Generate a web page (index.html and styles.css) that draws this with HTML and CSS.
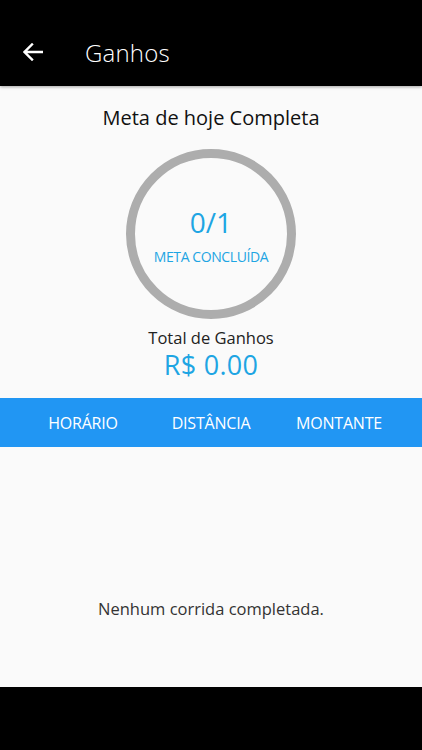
FILE: index.html
```html
<!DOCTYPE html>
<html lang="pt">
<head>
<meta charset="utf-8">
<link rel="stylesheet" href="styles.css">
</head>
<body>
<div class="screen">
  <header class="appbar">
    <svg class="back" width="20" height="18" viewBox="0 0 20 18" aria-hidden="true">
      <path d="M19 9H2M9 1.5L1.5 9L9 16.5" fill="none" stroke="#fff" stroke-width="2.4" stroke-linecap="square"/>
    </svg>
    <span class="title">Ganhos</span>
  </header>
  <main class="content">
    <section class="summary">
      <h1 class="goal-title">Meta de hoje Completa</h1>
      <div class="ring">
        <span class="ring-count">0/1</span>
        <span class="ring-label">META CONCLUÍDA</span>
      </div>
      <div class="total-label">Total de Ganhos</div>
      <div class="total-value">R$ 0.00</div>
    </section>
    <nav class="tabs">
      <span class="tab">HORÁRIO</span>
      <span class="tab">DISTÂNCIA</span>
      <span class="tab">MONTANTE</span>
    </nav>
    <div class="empty">Nenhum corrida completada.</div>
  </main>
  <footer class="navbar"></footer>
</div>
</body>
</html>
```
FILE: styles.css
```css
* { box-sizing: border-box; margin: 0; padding: 0; }
html, body { width: 422px; height: 750px; background: #000; }
body { font-family: "Open Sans", "Noto Sans", sans-serif; }
.screen { width: 422px; height: 750px; display: flex; flex-direction: column; }
.appbar {
  height: 86px; background: #000; display: flex; align-items: center;
  padding: 18px 0 0 23px; position: relative; z-index: 1;
  box-shadow: 0 1px 3px rgba(0,0,0,0.35);
}
.back { display: block; }
.title { color: #fff; font-size: 24px; font-weight: 300; margin-left: 42px; letter-spacing: 0.2px; }
.content { flex: 1; background: #fafafa; display: flex; flex-direction: column; }
.summary { display: flex; flex-direction: column; align-items: center; padding-top: 18px; }
.goal-title { font-size: 20px; font-weight: 400; color: #111; line-height: 28px; }
.ring {
  margin-top: 17px; width: 170px; height: 170px; border-radius: 50%;
  border: 9.5px solid #adadad; display: flex; flex-direction: column; align-items: center;
  justify-content: center;
}
.ring-count { color: #1ea5e3; font-size: 28px; line-height: 34px; margin-top: 2px; }
.ring-label { color: #1ea5e3; font-size: 14px; line-height: 18px; margin-top: 9px; letter-spacing: -0.4px; }
.total-label { margin-top: 7px; font-size: 16.5px; color: #222; line-height: 24px; }
.total-value { font-size: 27px; color: #1ea5e3; line-height: 30px; letter-spacing: 0.3px; }
.tabs {
  margin-top: 18px; height: 49px; background: #2196f3; display: grid;
  grid-template-columns: repeat(3, 1fr); padding: 0 19px; align-items: center;
}
.tab { color: #fff; font-size: 16px; text-align: center; letter-spacing: -0.2px; }
.empty { margin-top: 150px; text-align: center; font-size: 16.5px; color: #333; }
.navbar { height: 63px; background: #000; }
```
